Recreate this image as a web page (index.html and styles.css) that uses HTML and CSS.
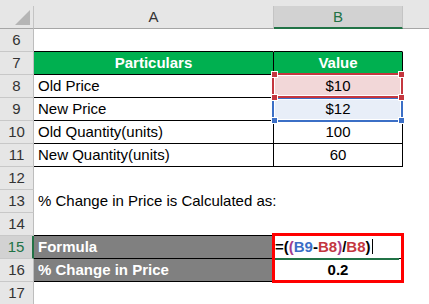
FILE: index.html
```html
<!DOCTYPE html>
<html lang="en">
<head>
  <meta charset="UTF-8" />
  <meta name="viewport" content="width=device-width, initial-scale=1.0"/>
  <title>% Change in Price</title>
  <link rel="stylesheet" href="styles.css">
</head>
<body>
  <div class="sheet-wrap">
    <div class="top-strip"></div>
    <table class="sheet">
      <colgroup>
        <col class="c-rh">
        <col class="c-a">
        <col class="c-b">
        <col class="c-c">
      </colgroup>
      <tr class="col-head">
        <th class="corner"><span class="tri"></span></th>
        <th>A</th>
        <th class="sel">B</th>
        <th></th>
      </tr>
      <tr>
        <th class="rh">6</th>
        <td class="edge-bottom"></td>
        <td class="edge-bottom"></td>
        <td></td>
      </tr>
      <tr>
        <th class="rh">7</th>
        <td class="box head-green center">Particulars</td>
        <td class="box head-green center">Value</td>
        <td></td>
      </tr>
      <tr>
        <th class="rh">8</th>
        <td class="box">Old Price</td>
        <td class="box center fill-red">$10</td>
        <td></td>
      </tr>
      <tr>
        <th class="rh">9</th>
        <td class="box">New Price</td>
        <td class="box center fill-blue">$12</td>
        <td></td>
      </tr>
      <tr>
        <th class="rh">10</th>
        <td class="box">Old Quantity(units)</td>
        <td class="box center">100</td>
        <td></td>
      </tr>
      <tr>
        <th class="rh">11</th>
        <td class="box">New Quantity(units)</td>
        <td class="box center">60</td>
        <td></td>
      </tr>
      <tr>
        <th class="rh">12</th>
        <td></td>
        <td></td>
        <td></td>
      </tr>
      <tr>
        <th class="rh">13</th>
        <td class="spill">% Change in Price is Calculated as:</td>
        <td></td>
        <td></td>
      </tr>
      <tr>
        <th class="rh">14</th>
        <td class="edge-bottom"></td>
        <td class="edge-bottom"></td>
        <td></td>
      </tr>
      <tr>
        <th class="rh active">15</th>
        <td class="box head-gray">Formula</td>
        <td class="box formula">=(<span class="paren">(</span><span class="ref-blue">B9</span>-<span class="ref-red">B8</span><span class="paren">)</span>/<span class="ref-red">B8</span>)<span class="caret"></span></td>
        <td></td>
      </tr>
      <tr>
        <th class="rh">16</th>
        <td class="box head-gray">% Change in Price</td>
        <td class="box center bold">0.2</td>
        <td></td>
      </tr>
      <tr>
        <th class="rh">17</th>
        <td></td>
        <td></td>
        <td></td>
      </tr>
    </table>

    <!-- reference highlights drawn over the cells -->
    <div class="hl hl-blue"></div>
    <div class="hl hl-red"></div>
    <span class="knob knob-red" style="left:271px;top:71px"></span>
    <span class="knob knob-red" style="left:398px;top:71px"></span>
    <span class="knob knob-red" style="left:271px;top:94px"></span>
    <span class="knob knob-red" style="left:398px;top:94px"></span>
    <span class="knob knob-blue" style="left:271px;top:117px"></span>
    <span class="knob knob-blue" style="left:398px;top:117px"></span>

    <div class="edit-line"></div>
    <div class="focus-box"></div>
  </div>
</body>
</html>
```

FILE: styles.css
```css
* {
  box-sizing: border-box;
}

body {
  margin: 0;
  background: #fff;
  font-family: 'Liberation Sans', Arial, sans-serif;
  font-size: 15px;
  color: #000;
}

.sheet-wrap {
  position: relative;
  width: 429px;
  height: 304px;
  overflow: hidden;
}

.top-strip {
  height: 6px;
  background: #e6e6e6;
}

.sheet {
  border-collapse: separate;
  border-spacing: 0;
  table-layout: fixed;
  width: 429px;
}

.c-rh { width: 34px; }
.c-a  { width: 240px; }
.c-b  { width: 129px; }
.c-c  { width: 26px; }

th, td {
  height: 23px;
  padding: 0 4px;
  line-height: 22px;
  border-right: 1px solid transparent;
  border-bottom: 1px solid transparent;
  white-space: nowrap;
  overflow: hidden;
  text-align: left;
  font-weight: normal;
}

/* column header row */
.col-head th {
  background: #e6e6e6;
  color: #333;
  text-align: center;
  border-right: 1px solid #c4c4c4;
  border-bottom: 1px solid #a6a6a6;
}

.col-head th:last-child {
  border-right: none;
}

.col-head th.sel {
  background: #d2d2d2;
  color: #217346;
  border-bottom: 2px solid #217346;
  line-height: 21px;
}

.corner {
  position: relative;
}

.tri {
  position: absolute;
  right: 3px;
  bottom: 3px;
  width: 0;
  height: 0;
  border-left: 15px solid transparent;
  border-bottom: 15px solid #b5b5b5;
}

/* row headers */
.rh {
  background: #e6e6e6;
  color: #333;
  text-align: center;
  padding: 0;
  border-right: 1px solid #bdbdbd;
  border-bottom: 1px solid #c8c8c8;
}

.rh.active {
  background: #d2d2d2;
  color: #217346;
  border-right: 2px solid #217346;
}

/* data table */
.box {
  border-right: 1px solid #000;
  border-bottom: 1px solid #000;
}

.edge-bottom {
  border-bottom: 1px solid #000;
}

.center {
  text-align: center;
}

.bold {
  font-weight: bold;
}

.head-green {
  background: #00b050;
  color: #fff;
  font-weight: bold;
}

.head-gray {
  background: #808080;
  color: #fff;
  font-weight: bold;
}

.fill-red {
  background: #f2d7d8;
}

.fill-blue {
  background: #e8eef8;
}

.spill {
  overflow: visible;
}

.formula {
  font-weight: bold;
  padding-left: 1px;
  overflow: visible;
}

.paren {
  color: #a33c8f;
}

.ref-blue {
  color: #3b6fc6;
}

.ref-red {
  color: #c4373f;
}

.caret {
  display: inline-block;
  width: 1px;
  height: 15px;
  margin-left: 1px;
  background: #000;
  vertical-align: -2px;
}

/* overlays */
.hl {
  position: absolute;
  left: 272px;
  width: 131px;
  height: 25px;
  box-shadow: inset 0 0 0 1px #fff;
}

.hl-red {
  top: 73px;
  border: 2px solid #c4373f;
}

.hl-blue {
  top: 97px;
  border: 2px solid #3b6fc6;
}

.knob {
  position: absolute;
  width: 7px;
  height: 7px;
  border: 1px solid #fff;
}

.knob-red {
  background: #c4373f;
}

.knob-blue {
  background: #3b6fc6;
}

.edit-line {
  position: absolute;
  left: 275px;
  top: 258px;
  width: 124px;
  height: 2px;
  background: #217346;
}

.focus-box {
  position: absolute;
  left: 272px;
  top: 233px;
  width: 132px;
  height: 50px;
  border: 3px solid #ff0000;
}
```
